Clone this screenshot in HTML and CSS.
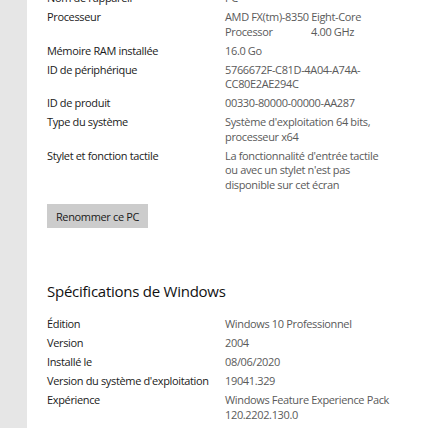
FILE: index.html
```html
<!DOCTYPE html>
<html lang="fr">
<head>
<meta charset="utf-8">
<title>Informations système</title>
<link rel="stylesheet" href="styles.css">
</head>
<body>
<div class="nav"></div>
<main class="content">
  <dl class="specs specs-device">
    <div class="row"><dt>Nom de l'appareil</dt><dd>PC</dd></div>
    <div class="row"><dt>Processeur</dt><dd>AMD FX(tm)-8350 Eight-Core<br><span class="proc">Processor</span>4.00 GHz</dd></div>
    <div class="row"><dt>Mémoire RAM installée</dt><dd>16.0 Go</dd></div>
    <div class="row"><dt>ID de périphérique</dt><dd>5766672F-C81D-4A04-A74A-<br>CC80E2AE294C</dd></div>
    <div class="row"><dt>ID de produit</dt><dd>00330-80000-00000-AA287</dd></div>
    <div class="row"><dt>Type du système</dt><dd>Système d'exploitation 64 bits,<br>processeur x64</dd></div>
    <div class="row"><dt>Stylet et fonction tactile</dt><dd>La fonctionnalité d'entrée tactile<br>ou avec un stylet n'est pas<br>disponible sur cet écran</dd></div>
  </dl>
  <button class="btn" type="button">Renommer ce PC</button>
  <h2 class="heading">Spécifications de Windows</h2>
  <dl class="specs">
    <div class="row"><dt>Édition</dt><dd>Windows 10 Professionnel</dd></div>
    <div class="row"><dt>Version</dt><dd>2004</dd></div>
    <div class="row"><dt>Installé le</dt><dd>08/06/2020</dd></div>
    <div class="row"><dt>Version du système d'exploitation</dt><dd>19041.329</dd></div>
    <div class="row"><dt>Expérience</dt><dd>Windows Feature Experience Pack<br>120.2202.130.0</dd></div>
  </dl>
</main>
</body>
</html>
```
FILE: styles.css
```css
html, body {
  margin: 0;
  padding: 0;
  height: 100%;
  overflow: hidden;
  background: #ffffff;
}
body {
  display: flex;
  font-family: "Open Sans", "Noto Sans", sans-serif;
  font-size: 11px;
  letter-spacing: -0.35px;
  color: #1a1a1a;
}
.nav {
  width: 27px;
  flex: none;
  background: #e6e6e6;
}
.content {
  flex: 1;
  padding-left: 20px;
  margin-top: -9px;
}
.specs {
  margin: 0;
  display: flex;
  flex-direction: column;
  gap: 4.5px;
}
.row {
  display: grid;
  grid-template-columns: 178px 1fr;
  line-height: 14.5px;
}
dt {
  color: #1a1a1a;
}
dd {
  margin: 0;
  color: #5a5a5a;
  white-space: nowrap;
}
.proc {
  display: inline-block;
  width: 86px;
}
.btn {
  display: block;
  margin-top: 12px;
  width: 101px;
  height: 24px;
  padding: 0;
  border: none;
  background: #cccccc;
  font-family: inherit;
  font-size: 11px;
  letter-spacing: -0.35px;
  color: #1a1a1a;
}
.heading {
  margin: 52px 0 15px;
  font-weight: 400;
  font-size: 15px;
  letter-spacing: -0.25px;
  line-height: 22px;
  color: #111;
}
```
